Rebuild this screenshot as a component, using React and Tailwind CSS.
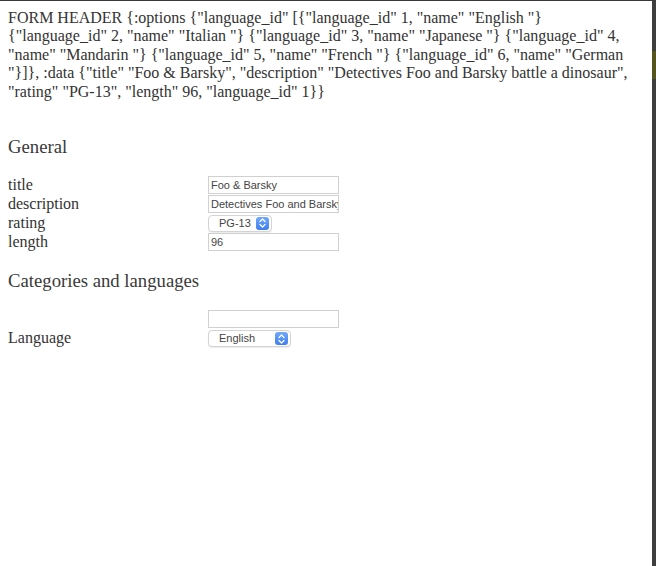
import React from 'react';

const HEADER_LINES = [
    'FORM HEADER {:options {"language_id" [{"language_id" 1, "name" "English "}',
    '{"language_id" 2, "name" "Italian "} {"language_id" 3, "name" "Japanese "} {"language_id" 4,',
    '"name" "Mandarin "} {"language_id" 5, "name" "French "} {"language_id" 6, "name" "German',
    '"}]}, :data {"title" "Foo & Barsky", "description" "Detectives Foo and Barsky battle a dinosaur",',
    '"rating" "PG-13", "length" 96, "language_id" 1}}',
];

const serif = "font-['Liberation_Serif','Times_New_Roman',serif]";
const sans = "font-['Liberation_Sans',Arial,sans-serif]";

// mac-style little blue stepper on selects
const Stepper = () => (
    <span className="flex h-[13px] w-[13px] items-center justify-center rounded-[3px] bg-gradient-to-b from-[#72a8f7] to-[#3e7ef0]">
        <svg width="7" height="10" viewBox="0 0 7 10" fill="none" stroke="white" strokeWidth="1.3" strokeLinecap="round" strokeLinejoin="round">
            <path d="M1 3.5 L3.5 1 L6 3.5" />
            <path d="M1 6.5 L3.5 9 L6 6.5" />
        </svg>
    </span>
);

const FakeSelect = ({ value, width }) => (
    <div className={`flex h-[17px] ${width} items-center justify-between rounded-[4px] border border-[#d4d4d4] bg-white pl-[10px] pr-[2px] text-[11px] text-[#444] shadow-[0_1px_1px_rgba(0,0,0,0.08)] ${sans}`}>
        <span className="leading-none">{value}</span>
        <Stepper />
    </div>
);

const TextInput = ({ value }) => (
    <div className={`flex h-[18px] w-[131px] items-center overflow-hidden whitespace-nowrap border border-[#d0d0d0] bg-white px-[2px] text-[11px] text-[#444] ${sans}`}>
        {value}
    </div>
);

const Row = ({ label, children }) => (
    <div className="flex h-[19px] items-center">
        <span className="w-[200px]">{label}</span>
        {children}
    </div>
);

export default function App() {
    return (
        <div className="flex h-[566px] w-[656px] overflow-hidden border-t border-[#3a3a3a] bg-white">
            <main className={`flex-1 p-2 text-[16px] leading-[18.4px] text-[#333] ${serif}`}>
                <div>
                    {HEADER_LINES.map((line) => (
                        <div key={line} className="whitespace-nowrap">{line}</div>
                    ))}
                </div>

                <h3 className="mt-[35px] text-[18.72px] leading-[21.5px] text-[#3a3a3a]">General</h3>

                <div className="mt-[18px] flex flex-col">
                    <Row label="title"><TextInput value="Foo & Barsky" /></Row>
                    <Row label="description"><TextInput value="Detectives Foo and Barsky battle a dinosaur" /></Row>
                    <Row label="rating"><FakeSelect value="PG-13" width="w-[64px]" /></Row>
                    <Row label="length"><TextInput value="96" /></Row>
                </div>

                <h3 className="mt-[18px] text-[18.72px] leading-[21.5px] text-[#3a3a3a]">Categories and languages</h3>

                <div className="mt-[19px] flex items-end">
                    <span className="w-[200px]">Language</span>
                    <div className="flex flex-col gap-[2px]">
                        <TextInput value="" />
                        <FakeSelect value="English" width="w-[83px]" />
                    </div>
                </div>
            </main>

            {/* strip of the neighbouring window */}
            <div className="flex w-[4px] flex-col bg-[#3e3e3e]">
                <div className="h-[50px]" />
                <div className="h-[28px] bg-[#56551f]" />
            </div>
        </div>
    );
}
